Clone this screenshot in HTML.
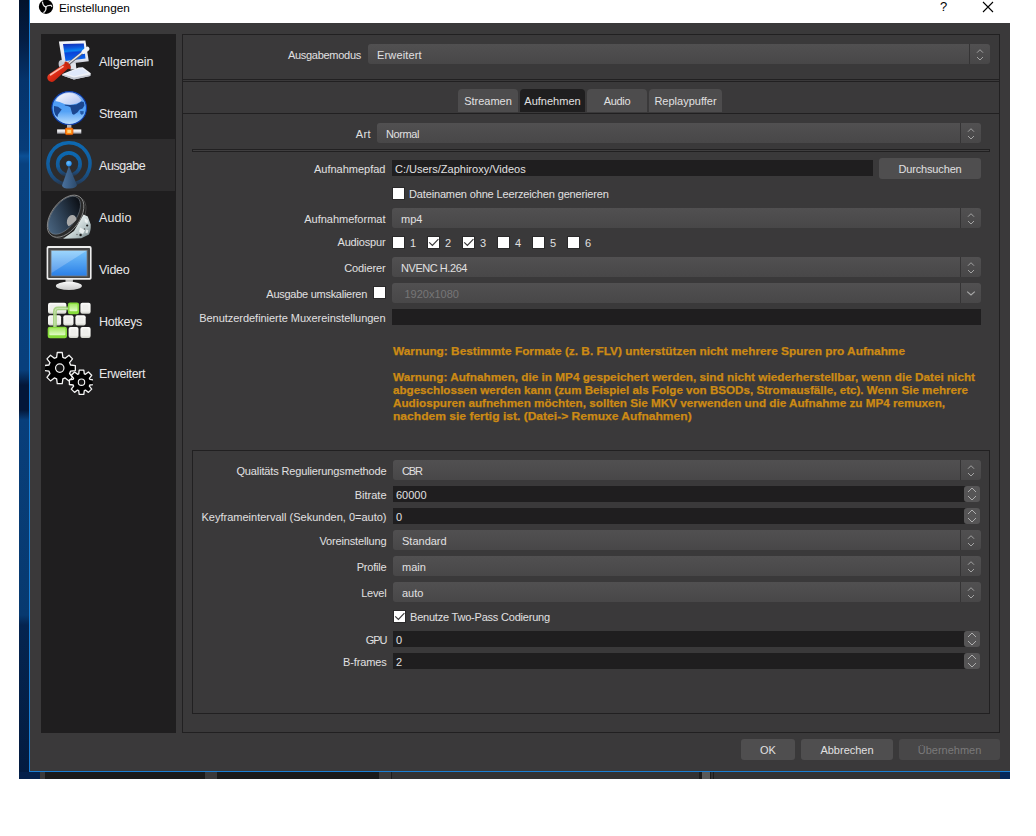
<!DOCTYPE html>
<html><head><meta charset="utf-8"><title>Einstellungen</title>
<style>
html,body{margin:0;padding:0;background:#fff;}
body{width:1036px;height:836px;position:relative;overflow:hidden;font-family:"Liberation Sans",sans-serif;font-size:11px;color:#e1e0e1;}
div,span,svg,i{position:absolute;box-sizing:border-box;}
.t{white-space:pre;height:20px;line-height:23px;font-size:11px;}
.lb{text-align:right;}
.cb{height:20px;border-radius:3px;background:linear-gradient(180deg,#515051 0%,#484748 100%);}
.cb i{right:20px;top:0;width:1px;height:20px;background:#353435;}
.cb .ar{right:0;top:0;}
.in{height:16px;background:#1f1e1f;}
.sp{width:16px;height:16px;border-radius:3px;background:#565556;}
.ck{width:13px;height:13px;border:1px solid #2a292a;background:#fff;}
.ck svg{left:0;top:0;}
.bt{height:21px;border-radius:3px;background:#4f4e4f;text-align:center;line-height:22px;font-size:11px;}
.tab{height:23px;top:89px;border-radius:4px 4px 0 0;background:#4d4c4d;text-align:center;line-height:25px;font-size:11px;}
.si{left:42px;width:133px;height:52px;}
.si .n{left:57px;top:16px;height:20px;line-height:23px;font-size:12.5px;white-space:pre;color:#e8e7e8;}
.w{-webkit-text-stroke:0.25px #cc8a14;left:393px;white-space:pre;font-weight:bold;font-size:11px;line-height:13px;color:#cc8a14;transform-origin:0 0;}
</style></head><body>
<div  style="left:19px;top:0px;width:11px;height:779px;background:linear-gradient(180deg,#02122c 0px,#031d44 40px,#05336b 80px,#073c79 150px,#0b4f95 156px,#08417f 164px,#083f7c 370px,#031739 385px,#031739 410px,#083e7a 420px,#07396f 615px,#042450 625px,#031b3f 779px);"></div>
<div  style="left:1000px;top:772px;width:10px;height:7px;background:#05275a;"></div>
<div  style="left:29px;top:0px;width:1px;height:772px;background:#1a7fd4;"></div>
<div  style="left:29px;top:771px;width:981px;height:1px;background:#1a7fd4;"></div>
<div  style="left:30px;top:0px;width:980px;height:23px;background:#fff;"></div>
<div  style="left:30px;top:23px;width:980px;height:748px;background:#3a393a;"></div>
<div  style="left:40px;top:772px;width:960px;height:7px;background:#333233;"></div>
<div  style="left:19px;top:772px;width:21px;height:7px;background:#04204b;"></div>
<div  style="left:40px;top:772px;width:5px;height:7px;background:#3a393a;"></div>
<div  style="left:45px;top:772px;width:160px;height:7px;background:#1a1a1a;"></div>
<div  style="left:205px;top:772px;width:12px;height:7px;background:#3a393a;"></div>
<div  style="left:217px;top:772px;width:162px;height:7px;background:#1a1a1a;"></div>
<div  style="left:379px;top:772px;width:12px;height:7px;background:#3a393a;"></div>
<div  style="left:391px;top:772px;width:1px;height:7px;background:#1c1c1c;"></div>
<div  style="left:699px;top:772px;width:3px;height:7px;background:#1c1c1c;"></div>
<div  style="left:702px;top:772px;width:8px;height:7px;background:#5a5a5a;"></div>
<div  style="left:710px;top:772px;width:1px;height:7px;background:#1c1c1c;"></div>
<div  style="left:713px;top:772px;width:1px;height:7px;background:#1c1c1c;"></div>
<svg style="left:38px;top:-1px" width="16" height="16" viewBox="0 0 16 16"><circle cx="8" cy="7.8" r="7.15" fill="#000"/><g fill="none" stroke="#e4e4e4" stroke-width="1.25" stroke-linecap="round"><path d="M7.85 7.95 Q5 7.3 4.5 3.2"/><path d="M7.85 7.95 Q9.4 6.2 12.9 6.4 Q13.6 6.8 13.7 7.5"/><path d="M7.85 7.95 Q8.7 11 5.8 13.4"/></g></svg>
<div style="left:59px;top:0;height:16px;line-height:16px;font-size:11.8px;color:#000;white-space:pre;">Einstellungen</div>
<div style="left:940px;top:-1px;height:16px;line-height:16px;font-size:13px;color:#000;">?</div>
<svg style="left:982px;top:1px" width="12" height="12" viewBox="0 0 12 12"><path d="M1 1 L11 11 M11 1 L1 11" stroke="#000" stroke-width="1.1" fill="none"/></svg>
<div  style="left:41px;top:34px;width:135px;height:699px;background:#1f1e1f;"></div>
<div class="si" style="top:35px;"><svg style="left:2px;top:1px" width="52" height="52" viewBox="0 0 52 52">
<defs><linearGradient id="scr" x1="0" y1="0" x2="0.12" y2="1"><stop offset="0" stop-color="#1428b2"/><stop offset=".3" stop-color="#0c5ce0"/><stop offset=".46" stop-color="#0a86f2"/><stop offset=".56" stop-color="#0a44d8"/><stop offset="1" stop-color="#0a66ec"/></linearGradient>
<linearGradient id="hnd" x1="0" y1="0" x2="1" y2="1"><stop offset="0" stop-color="#ff8a70"/><stop offset=".45" stop-color="#e02c16"/><stop offset="1" stop-color="#9c1806"/></linearGradient>
<linearGradient id="mf" x1="0" y1="0" x2="0" y2="1"><stop offset="0" stop-color="#f6f7fa"/><stop offset=".8" stop-color="#e2e4ec"/><stop offset="1" stop-color="#b8bcc8"/></linearGradient></defs>
<ellipse cx="18.4" cy="28" rx="3.8" ry="4.2" fill="#c4c8d2"/>
<polygon points="26,25 31.5,25 32.5,33.5 26.5,33.5" fill="#e0e3ea"/>
<polygon points="18.4,38 34.6,31.6 38.8,31.2 46.8,37.3 46.2,40 29.9,43.4 18.4,39.4" fill="#f0f2f8"/>
<polygon points="18.4,39.4 29.9,43.4 46.2,40 46.6,38.6 29.9,41.6 18.4,38.3" fill="#c2c6d0"/>
<polygon points="22,37.3 35,32.7 38.3,32.5 44,36.8 30.2,40.2" fill="#dfe8fa"/>
<polygon points="14.9,5.5 41.4,4.5 44.8,25.2 18.5,28.5" fill="url(#mf)"/>
<polygon points="19,8.1 39.8,7.6 41.5,22.4 21.5,24.9" fill="url(#scr)"/>
<line x1="24.5" y1="27.9" x2="40" y2="15.5" stroke="#66666c" stroke-width="2.8"/>
<line x1="24.5" y1="27.5" x2="40" y2="15.1" stroke="#e8e8ec" stroke-width="1.4"/>
<line x1="39.6" y1="15.9" x2="43.4" y2="12.8" stroke="#f4f4f6" stroke-width="4.2" stroke-linecap="round"/>
<path d="M5.0 38.2 L20.8 27.6 L24.4 32.3 L10.2 45.0 A4.2 4.2 0 0 1 5.0 38.2 Z" fill="url(#hnd)"/>
<ellipse cx="23.6" cy="29.2" rx="2" ry="4.3" transform="rotate(-36 23.6 29.2)" fill="#c8260e"/>
<path d="M6.6 38.8 L19 30.6" stroke="#ffc8b8" stroke-width="1.7" stroke-linecap="round" opacity=".9" fill="none"/>
</svg><div class="n" style="letter-spacing:-0.05px">Allgemein</div></div>
<div class="si" style="top:87px;"><svg style="left:2px;top:1px" width="52" height="52" viewBox="0 0 52 52">
<defs><linearGradient id="gl" x1="0" y1="0" x2="0" y2="1"><stop offset="0" stop-color="#c0d0f4"/><stop offset=".33" stop-color="#4e9cf4"/><stop offset=".6" stop-color="#54a2f6"/><stop offset="1" stop-color="#c0e0fd"/></linearGradient>
<linearGradient id="gh" x1="0" y1="0" x2="1" y2=".6"><stop offset="0" stop-color="#fff" stop-opacity=".95"/><stop offset="1" stop-color="#ccd2f4" stop-opacity=".85"/></linearGradient>
<linearGradient id="br" x1="0" y1="0" x2="0" y2="1"><stop offset="0" stop-color="#fafafa"/><stop offset=".5" stop-color="#e0e0e4"/><stop offset="1" stop-color="#8c8c94"/></linearGradient></defs>
<ellipse cx="25.2" cy="20.1" rx="17.3" ry="16.5" fill="url(#gl)" stroke="#0c3ca8" stroke-width="1.1"/>
<path d="M20.8 16.5 L26.1 17.1 L32.3 16.5 L37.3 13.4 L39.8 14 L40.4 17.4 L38.6 20.5 L35.4 21.8 L33.6 24.3 L29.9 26.7 L28.3 26.1 L27.4 23 L26.4 19.3 L24.3 18.3 L20.8 17.4 Z" fill="#1b468f"/>
<path d="M36.1 23 L39.8 23.3 L39.5 25.5 L37.9 27.1 L36.4 25.5 Z" fill="#2458a6"/>
<path d="M10 18 L14 18.7 L17.7 21.5 L15.9 23.9 L14 26.4 L13.4 29.2 L11.2 26.7 L10 23 Z" fill="#1b468f"/>
<path d="M11.5 13 Q14 6.5 24 5 Q33 4.6 37.6 12.6 Q34 16.6 26 16.8 L21 16.3 Q15 13.5 11.5 13 Z" fill="url(#gh)"/>
<rect x="23" y="36.8" width="4.4" height="3.8" fill="#b4b4ba"/>
<rect x="13.1" y="41.4" width="24.2" height="4.3" fill="url(#br)"/>
<rect x="21.5" y="40.1" width="7.4" height="6.5" rx="1" fill="#ff8a10" stroke="#e65400" stroke-width=".8"/>
<rect x="23.3" y="41.9" width="3.8" height="3" fill="#ffd27e"/>
</svg><div class="n" style="letter-spacing:-0.4px">Stream</div></div>
<div class="si" style="top:139px;background:#2d2c2d;"><svg style="left:2px;top:0px" width="52" height="52" viewBox="0 0 52 52">
<defs><linearGradient id="rg" x1="0" y1="0" x2="0" y2="1"><stop offset="0" stop-color="#0d68b0"/><stop offset=".6" stop-color="#125c9c"/><stop offset=".9" stop-color="#1f4670"/><stop offset="1" stop-color="#26384e"/></linearGradient>
<linearGradient id="cn" x1="0" y1="0" x2="1" y2="0"><stop offset="0" stop-color="#4a719e"/><stop offset="1" stop-color="#2b4a6c"/></linearGradient>
<radialGradient id="dt" cx=".4" cy=".35" r=".7"><stop offset="0" stop-color="#6cc0ff"/><stop offset="1" stop-color="#1a86ee"/></radialGradient></defs>
<path d="M20.5 45.2 A20.95 20.95 0 1 1 31 44.8" fill="none" stroke="url(#rg)" stroke-width="3.5"/>
<circle cx="24.9" cy="25.1" r="11.2" fill="none" stroke="url(#rg)" stroke-width="3.7"/>
<path d="M24.9 27 L18 46.4 Q19 49.8 26 49.6 Q32 49.2 33 46 Z" fill="url(#cn)"/>
<circle cx="24.9" cy="24.6" r="2.8" fill="url(#dt)"/>
</svg><div class="n" style="letter-spacing:-0.45px">Ausgabe</div></div>
<div class="si" style="top:191px;"><svg style="left:2px;top:0px" width="52" height="52" viewBox="0 0 52 52">
<defs><linearGradient id="sv" x1="0" y1="0" x2="1" y2="1"><stop offset="0" stop-color="#6c7c80"/><stop offset=".4" stop-color="#dfe8e8"/><stop offset=".7" stop-color="#b4c2c4"/><stop offset="1" stop-color="#5e6e72"/></linearGradient>
<linearGradient id="cone" x1="0" y1=".2" x2="1" y2=".5"><stop offset="0" stop-color="#4c6884"/><stop offset=".5" stop-color="#2c3e52"/><stop offset="1" stop-color="#0c1016"/></linearGradient>
<clipPath id="cc"><ellipse cx="0" cy="-1.6" rx="22" ry="11.8" transform="translate(21.6 25.2) rotate(-53.5)"/></clipPath></defs>
<g transform="translate(24 26.6) rotate(-53.5)"><ellipse rx="23.6" ry="14" fill="#1c1c1c" stroke="#4a4a4a" stroke-width=".8"/></g>
<path d="M39.5 23.5 L43.8 25.5 L46.7 33.6 Q47 40 45 43.5 L37.3 47.2 L19 47.8 L30 40 Z" fill="url(#sv)"/>
<path d="M40.5 27 L44 29.5 L43.4 32.5 L40.8 31 Z M36 36.5 L41 39 L39 43 L35 41 Z M42.4 38.5 l2 1 l-1 3 l-2 -1 Z" fill="#f4f8f8" opacity=".8"/>
<circle cx="43.2" cy="34.5" r="1.1" fill="#1c1c1c"/><circle cx="36.6" cy="44" r="1.2" fill="#1c1c1c"/><circle cx="40.5" cy="38" r=".8" fill="#555"/><circle cx="33" cy="43.5" r=".7" fill="#666"/>
<g transform="translate(21.6 25.2) rotate(-53.5)"><ellipse rx="24" ry="14.2" fill="#2a2a2a" stroke="#8c8c8c" stroke-width=".9"/>
<ellipse cx="0" cy="-1.6" rx="22" ry="11.8" fill="url(#cone)" stroke="#7e8a96" stroke-width=".5"/></g>
<ellipse cx="27.7" cy="30.2" rx="4.8" ry="6.3" transform="rotate(12 27.7 30.2)" fill="#a9a9a9" clip-path="url(#cc)"/>
</svg><div class="n" style="letter-spacing:0.1px">Audio</div></div>
<div class="si" style="top:243px;"><svg style="left:2px;top:0px" width="52" height="52" viewBox="0 0 52 52">
<defs><linearGradient id="vs" x1="0" y1="0" x2="0" y2="1"><stop offset="0" stop-color="#86ccfc"/><stop offset="1" stop-color="#2f7ee6"/></linearGradient>
<linearGradient id="vb" x1="0" y1="0" x2="0" y2="1"><stop offset="0" stop-color="#fafafa"/><stop offset="1" stop-color="#c8c8c8"/></linearGradient></defs>
<rect x="21.5" y="36" width="7.4" height="4.5" fill="#bebebe"/>
<ellipse cx="24.9" cy="42.9" rx="13" ry="4.1" fill="url(#vb)"/>
<rect x="2.6" y="3.1" width="45" height="33.6" rx="1.8" fill="#ededed"/>
<rect x="4.2" y="4.9" width="41.8" height="30.1" rx=".8" fill="#454545"/>
<rect x="6.6" y="7" width="36.9" height="26.4" fill="#7a7a7a"/>
<rect x="7.5" y="7.8" width="35.1" height="24.8" fill="url(#vs)"/>
<polygon points="7.5,7.8 42.6,7.8 7.5,30" fill="#fff" opacity=".18"/>
<polygon points="42.6,7.8 42.6,32.6 7.5,32.6 7.5,30" fill="#1a8af0" opacity=".15"/>
</svg><div class="n" style="letter-spacing:-0.25px">Video</div></div>
<div class="si" style="top:295px;"><svg style="left:2px;top:0px" width="52" height="52" viewBox="0 0 52 52">
<defs><linearGradient id="kw" x1="0" y1="0" x2="0" y2="1"><stop offset="0" stop-color="#fbfbf9"/><stop offset=".75" stop-color="#f0f0ec"/><stop offset="1" stop-color="#cfd1c9"/></linearGradient>
<linearGradient id="kg" x1="0" y1="0" x2="0" y2="1"><stop offset="0" stop-color="#a4e862"/><stop offset="1" stop-color="#e2fac8"/></linearGradient></defs><rect x="4" y="7.8" width="18.4" height="10.9" rx="2" fill="url(#kw)"/><rect x="6.2" y="9.4" width="13.999999999999998" height="5.9" rx="1" fill="#ecece8" opacity=".8"/><rect x="23.9" y="7.5" width="11.2" height="11.8" rx="2.2" fill="#86dc3a"/><rect x="25.5" y="8.9" width="7.999999999999999" height="7.4" rx="1" fill="url(#kg)"/><rect x="36.4" y="7.8" width="10.2" height="10.9" rx="2" fill="url(#kw)"/><rect x="38.6" y="9.4" width="5.799999999999999" height="5.9" rx="1" fill="#ecece8" opacity=".8"/><rect x="4" y="20.2" width="13.1" height="10.3" rx="2" fill="url(#kw)"/><rect x="6.2" y="21.8" width="8.7" height="5.300000000000001" rx="1" fill="#ecece8" opacity=".8"/><rect x="19.3" y="20.2" width="10.2" height="10.3" rx="2" fill="url(#kw)"/><rect x="21.5" y="21.8" width="5.799999999999999" height="5.300000000000001" rx="1" fill="#ecece8" opacity=".8"/><rect x="31.4" y="20.2" width="10.3" height="10.3" rx="2" fill="url(#kw)"/><rect x="33.6" y="21.8" width="5.9" height="5.300000000000001" rx="1" fill="#ecece8" opacity=".8"/><rect x="3.7" y="31.7" width="19.3" height="11.5" rx="2.2" fill="#86dc3a"/><rect x="5.300000000000001" y="33.1" width="16.1" height="7.1" rx="1" fill="url(#kg)"/><rect x="24.6" y="32" width="9.9" height="10.9" rx="2" fill="url(#kw)"/><rect x="26.8" y="33.6" width="5.5" height="5.9" rx="1" fill="#ecece8" opacity=".8"/><rect x="36.4" y="32" width="10.2" height="10.9" rx="2" fill="url(#kw)"/><rect x="38.6" y="33.6" width="5.799999999999999" height="5.9" rx="1" fill="#ecece8" opacity=".8"/><path d="M10.9 32 V16.6 Q10.9 13.4 14.2 13.4 H24.2" fill="none" stroke="#9ccc74" stroke-width="3.8" opacity=".85"/>
<path d="M10.9 32 V16.6 Q10.9 13.4 14.2 13.4 H24.2" fill="none" stroke="#d4ecc0" stroke-width="1" opacity=".8"/>
</svg><div class="n" style="letter-spacing:-0.3px">Hotkeys</div></div>
<div class="si" style="top:347px;"><svg style="left:3px;top:0px" width="48" height="52" viewBox="3 0 48 52"><g fill="#000" stroke="#f4f4f4" stroke-width="1.3" stroke-linejoin="round"><path d="M20.85 10.34L20.25 5.50L15.25 5.50L14.65 10.34A11.2 11.2 0 0 0 12.33 11.30L8.49 8.30L4.95 11.84L7.95 15.68A11.2 11.2 0 0 0 6.99 18.00L2.15 18.60L2.15 23.60L6.99 24.20A11.2 11.2 0 0 0 7.95 26.52L4.95 30.36L8.49 33.90L12.33 30.90A11.2 11.2 0 0 0 14.65 31.86L15.25 36.70L20.25 36.70L20.85 31.86A11.2 11.2 0 0 0 23.17 30.90L27.01 33.90L30.55 30.36L27.55 26.52A11.2 11.2 0 0 0 28.51 24.20L33.35 23.60L33.35 18.60L28.51 18.00A11.2 11.2 0 0 0 27.55 15.68L30.55 11.84L27.01 8.30L23.17 11.30A11.2 11.2 0 0 0 20.85 10.34Z"/><circle cx="17.75" cy="21.1" r="4.2" fill="#141414" stroke-width="1.2"/><path d="M42.30 26.86L41.80 23.10L37.20 23.10L36.70 26.86A8.8 8.8 0 0 0 35.58 27.32L32.57 25.02L29.32 28.27L31.62 31.28A8.8 8.8 0 0 0 31.16 32.40L27.40 32.90L27.40 37.50L31.16 38.00A8.8 8.8 0 0 0 31.62 39.12L29.32 42.13L32.57 45.38L35.58 43.08A8.8 8.8 0 0 0 36.70 43.54L37.20 47.30L41.80 47.30L42.30 43.54A8.8 8.8 0 0 0 43.42 43.08L46.43 45.38L49.68 42.13L47.38 39.12A8.8 8.8 0 0 0 47.84 38.00L51.60 37.50L51.60 32.90L47.84 32.40A8.8 8.8 0 0 0 47.38 31.28L49.68 28.27L46.43 25.02L43.42 27.32A8.8 8.8 0 0 0 42.30 26.86Z"/><circle cx="39.5" cy="35.2" r="3.2" fill="#141414" stroke-width="1.1"/></g></svg><div class="n" style="letter-spacing:-0.35px">Erweitert</div></div>
<div  style="left:182px;top:34px;width:1px;height:699px;background:#212021;"></div>
<div  style="left:999px;top:34px;width:1px;height:699px;background:#212021;"></div>
<div  style="left:182px;top:34px;width:818px;height:1px;background:#212021;"></div>
<div  style="left:182px;top:79px;width:818px;height:1px;background:#212021;"></div>
<div  style="left:182px;top:81px;width:818px;height:1px;background:#212021;"></div>
<div  style="left:182px;top:113px;width:818px;height:1px;background:#212021;"></div>
<div  style="left:182px;top:732px;width:818px;height:1px;background:#212021;"></div>
<div class="t lb" style="right:675px;top:44px;letter-spacing:-0.28px;">Ausgabemodus</div>
<div class="cb" style="left:368px;top:44px;width:622px;"><span class="t" style="left:9px;top:0;color:#e1e0e1;letter-spacing:0.15px;">Erweitert</span><i></i><svg class="ar" width="20" height="20" viewBox="0 0 20 20"><path d="M7 8.7 L10 5.7 L13 8.7 M7 13 L10 16 L13 13" fill="none" stroke="#a3a3a3" stroke-width="1"/></svg></div>
<div class="tab" style="left:458px;width:60px;letter-spacing:0px;">Streamen</div>
<div class="tab" style="left:520px;width:65px;letter-spacing:0px;background:#1f1e1f;">Aufnehmen</div>
<div class="tab" style="left:587px;width:60px;letter-spacing:-0.3px;">Audio</div>
<div class="tab" style="left:649px;width:73px;letter-spacing:0px;">Replaypuffer</div>
<div class="t lb" style="right:665px;top:123px;letter-spacing:0.4px;">Art</div>
<div class="cb" style="left:377px;top:123px;width:604px;"><span class="t" style="left:9px;top:0;color:#e1e0e1;letter-spacing:-0.4px;">Normal</span><i></i><svg class="ar" width="20" height="20" viewBox="0 0 20 20"><path d="M7 8.7 L10 5.7 L13 8.7 M7 13 L10 16 L13 13" fill="none" stroke="#a3a3a3" stroke-width="1"/></svg></div>
<div  style="left:192px;top:149px;width:798px;height:3px;border:1px solid #212021;background:#3f3e3f;"></div>
<div class="t lb" style="right:650.5px;top:158px;">Aufnahmepfad</div>
<div class="in" style="left:392px;top:160px;width:481px;"><span class="t" style="left:3px;top:-2px;">C:/Users/Zaphiroxy/Videos</span></div>
<div class="bt" style="left:879px;top:158px;width:102px;letter-spacing:-0.15px;">Durchsuchen</div>
<div class="ck" style="left:392px;top:187px;"></div>
<div class="t" style="left:409px;top:182.5px;letter-spacing:-0.15px;">Dateinamen ohne Leerzeichen generieren</div>
<div class="t lb" style="right:650.5px;top:208px;">Aufnahmeformat</div>
<div class="cb" style="left:392px;top:208px;width:589px;"><span class="t" style="left:9px;top:0;color:#e1e0e1;">mp4</span><i></i><svg class="ar" width="20" height="20" viewBox="0 0 20 20"><path d="M7 8.7 L10 5.7 L13 8.7 M7 13 L10 16 L13 13" fill="none" stroke="#a3a3a3" stroke-width="1"/></svg></div>
<div class="t lb" style="right:650.5px;top:231.3px;letter-spacing:-0.17px;">Audiospur</div>
<div class="ck" style="left:392px;top:236px;"></div>
<div class="t" style="left:410px;top:231.5px;">1</div>
<div class="ck" style="left:427px;top:236px;"><svg width="11" height="11" viewBox="0 0 11 11"><path d="M1.2 5.3 L4.4 8.5 L10.4 2.2" fill="none" stroke="#3a393a" stroke-width="1.2"/></svg></div>
<div class="t" style="left:445px;top:231.5px;">2</div>
<div class="ck" style="left:462px;top:236px;"><svg width="11" height="11" viewBox="0 0 11 11"><path d="M1.2 5.3 L4.4 8.5 L10.4 2.2" fill="none" stroke="#3a393a" stroke-width="1.2"/></svg></div>
<div class="t" style="left:480px;top:231.5px;">3</div>
<div class="ck" style="left:497px;top:236px;"></div>
<div class="t" style="left:515px;top:231.5px;">4</div>
<div class="ck" style="left:532px;top:236px;"></div>
<div class="t" style="left:550px;top:231.5px;">5</div>
<div class="ck" style="left:567px;top:236px;"></div>
<div class="t" style="left:585px;top:231.5px;">6</div>
<div class="t lb" style="right:650.5px;top:257px;letter-spacing:-0.12px;">Codierer</div>
<div class="cb" style="left:392px;top:257px;width:589px;"><span class="t" style="left:9px;top:0;color:#e1e0e1;letter-spacing:-0.45px;">NVENC H.264</span><i></i><svg class="ar" width="20" height="20" viewBox="0 0 20 20"><path d="M7 8.7 L10 5.7 L13 8.7 M7 13 L10 16 L13 13" fill="none" stroke="#a3a3a3" stroke-width="1"/></svg></div>
<div class="t lb" style="right:669px;top:283px;letter-spacing:-0.27px;">Ausgabe umskalieren</div>
<div class="ck" style="left:373px;top:286px;"></div>
<div class="cb" style="left:392px;top:283px;width:589px;"><span class="t" style="left:12.5px;top:0;color:#777677;">1920x1080</span><i></i><svg class="ar" width="20" height="20" viewBox="0 0 20 20"><path d="M6.2 8.6 L10 12 L13.8 8.6" fill="none" stroke="#a8a8a8" stroke-width="1.2"/></svg></div>
<div class="t lb" style="right:650.5px;top:307px;letter-spacing:-0.04px;">Benutzerdefinierte Muxereinstellungen</div>
<div class="in" style="left:392px;top:309px;width:589px;"><span class="t" style="left:3px;top:-2px;"></span></div>
<div class="w" style="top:345px;transform:scaleX(1.0763);">Warnung: Bestimmte Formate (z. B. FLV) unterstützen nicht mehrere Spuren pro Aufnahme</div>
<div class="w" style="top:371px;transform:scaleX(1.0679);">Warnung: Aufnahmen, die in MP4 gespeichert werden, sind nicht wiederherstellbar, wenn die Datei nicht</div>
<div class="w" style="top:384px;transform:scaleX(1.056);">abgeschlossen werden kann (zum Beispiel als Folge von BSODs, Stromausfälle, etc). Wenn Sie mehrere</div>
<div class="w" style="top:397px;transform:scaleX(1.0634);">Audiospuren aufnehmen möchten, sollten Sie MKV verwenden und die Aufnahme zu MP4 remuxen,</div>
<div class="w" style="top:410px;transform:scaleX(1.096);">nachdem sie fertig ist. (Datei-> Remuxe Aufnahmen)</div>
<div  style="left:192px;top:450px;width:798px;height:264px;border:1px solid #212021;"></div>
<div class="t lb" style="right:649.5px;top:460px;letter-spacing:-0.14px;">Qualitäts Regulierungsmethode</div>
<div class="cb" style="left:393px;top:460px;width:588px;"><span class="t" style="left:9px;top:0;color:#e1e0e1;letter-spacing:-1.1px;">CBR</span><i></i><svg class="ar" width="20" height="20" viewBox="0 0 20 20"><path d="M7 8.7 L10 5.7 L13 8.7 M7 13 L10 16 L13 13" fill="none" stroke="#a3a3a3" stroke-width="1"/></svg></div>
<div class="t lb" style="right:649.5px;top:484px;">Bitrate</div>
<div class="in" style="left:393px;top:486px;width:579px;"><span class="t" style="left:3px;top:-2px;">60000</span></div>
<div class="sp" style="left:964px;top:486px;"><svg width="16" height="16" viewBox="0 0 16 16"><path d="M4 6 L8 2 L12 6 M4 10 L8 14 L12 10" fill="none" stroke="#adadad" stroke-width="1"/></svg></div>
<div class="t lb" style="right:649.5px;top:506px;">Keyframeintervall (Sekunden, 0=auto)</div>
<div class="in" style="left:393px;top:508px;width:579px;"><span class="t" style="left:3px;top:-2px;">0</span></div>
<div class="sp" style="left:964px;top:508px;"><svg width="16" height="16" viewBox="0 0 16 16"><path d="M4 6 L8 2 L12 6 M4 10 L8 14 L12 10" fill="none" stroke="#adadad" stroke-width="1"/></svg></div>
<div class="t lb" style="right:649.5px;top:530px;letter-spacing:-0.15px;">Voreinstellung</div>
<div class="cb" style="left:393px;top:530px;width:588px;"><span class="t" style="left:9px;top:0;color:#e1e0e1;">Standard</span><i></i><svg class="ar" width="20" height="20" viewBox="0 0 20 20"><path d="M7 8.7 L10 5.7 L13 8.7 M7 13 L10 16 L13 13" fill="none" stroke="#a3a3a3" stroke-width="1"/></svg></div>
<div class="t lb" style="right:649.5px;top:556px;letter-spacing:-0.2px;">Profile</div>
<div class="cb" style="left:393px;top:556px;width:588px;"><span class="t" style="left:9px;top:0;color:#e1e0e1;">main</span><i></i><svg class="ar" width="20" height="20" viewBox="0 0 20 20"><path d="M7 8.7 L10 5.7 L13 8.7 M7 13 L10 16 L13 13" fill="none" stroke="#a3a3a3" stroke-width="1"/></svg></div>
<div class="t lb" style="right:649.5px;top:582px;letter-spacing:-0.2px;">Level</div>
<div class="cb" style="left:393px;top:582px;width:588px;"><span class="t" style="left:9px;top:0;color:#e1e0e1;">auto</span><i></i><svg class="ar" width="20" height="20" viewBox="0 0 20 20"><path d="M7 8.7 L10 5.7 L13 8.7 M7 13 L10 16 L13 13" fill="none" stroke="#a3a3a3" stroke-width="1"/></svg></div>
<div class="ck" style="left:393px;top:610px;"><svg width="11" height="11" viewBox="0 0 11 11"><path d="M1.2 5.3 L4.4 8.5 L10.4 2.2" fill="none" stroke="#3a393a" stroke-width="1.2"/></svg></div>
<div class="t" style="left:410px;top:605.5px;letter-spacing:-0.21px;">Benutze Two-Pass Codierung</div>
<div class="t lb" style="right:649.5px;top:629px;letter-spacing:-1px;">GPU</div>
<div class="in" style="left:393px;top:631px;width:579px;"><span class="t" style="left:3px;top:-2px;">0</span></div>
<div class="sp" style="left:964px;top:631px;"><svg width="16" height="16" viewBox="0 0 16 16"><path d="M4 6 L8 2 L12 6 M4 10 L8 14 L12 10" fill="none" stroke="#adadad" stroke-width="1"/></svg></div>
<div class="t lb" style="right:649.5px;top:651px;letter-spacing:-0.15px;">B-frames</div>
<div class="in" style="left:393px;top:653px;width:579px;"><span class="t" style="left:3px;top:-2px;">2</span></div>
<div class="sp" style="left:964px;top:653px;"><svg width="16" height="16" viewBox="0 0 16 16"><path d="M4 6 L8 2 L12 6 M4 10 L8 14 L12 10" fill="none" stroke="#adadad" stroke-width="1"/></svg></div>
<div class="bt" style="left:741px;top:739px;width:54px;">OK</div>
<div class="bt" style="left:801px;top:739px;width:92px;">Abbrechen</div>
<div class="bt" style="left:899px;top:739px;width:101px;background:#484748;color:#7a797a;">Übernehmen</div>
</body></html>
